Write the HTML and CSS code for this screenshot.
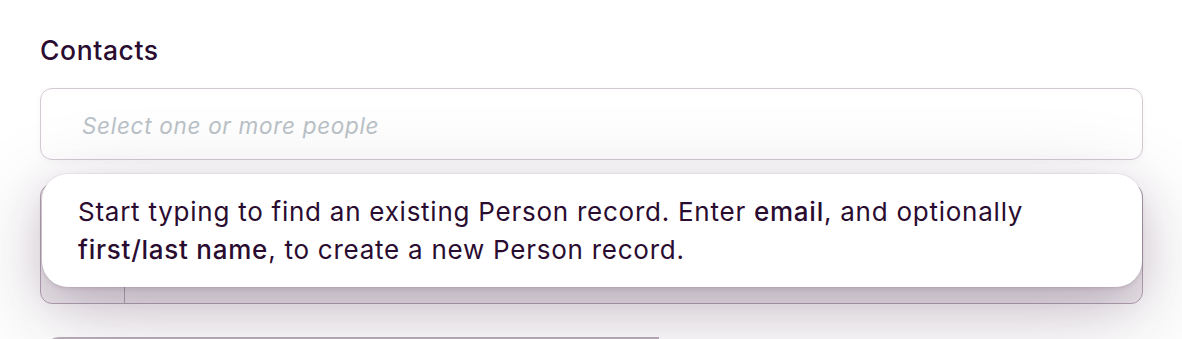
FILE: index.html
```html
<!DOCTYPE html>
<html>
<head>
<meta charset="utf-8">
<link rel="stylesheet" href="styles.css">
</head>
<body>
<div class="page">
  <div class="field">
    <label class="label">Contacts</label>
    <div class="input">
      <span class="placeholder">Select one or more people</span>
    </div>
    <div class="composite">
      <div class="prefix"></div>
      <div class="main"></div>
    </div>
    <div class="next"></div>
    <div class="popover">
      Start typing to find an existing Person record. Enter <b>email</b>, and optionally <b>first/last name</b>, to create a new Person record.
    </div>
  </div>
</div>
</body>
</html>
```
FILE: styles.css
```css
html, body {
  margin: 0;
  padding: 0;
  background: #ffffff;
  overflow: hidden;
}
.page {
  width: 1182px;
  height: 339px;
  overflow: hidden;
  font-family: Inter, "Noto Sans", sans-serif;
  color: #2a0c30;
}
.field {
  position: relative;
  margin-left: 40px;
  width: 1103px;
  padding-top: 35px;
  display: flex;
  flex-direction: column;
}
.label {
  font-size: 26.5px;
  line-height: 31px;
  font-weight: 500;
  letter-spacing: 0.6px;
  margin-bottom: 22px;
}
.input {
  box-sizing: border-box;
  height: 72px;
  border: 1.5px solid #d3cad4;
  border-radius: 12px;
  display: flex;
  align-items: center;
  padding-left: 41px;
  box-shadow: 0 2px 6px rgba(60, 30, 60, 0.04);
}
.placeholder {
  font-style: italic;
  font-size: 22.5px;
  letter-spacing: 0.7px;
  color: #bac2c8;
  padding-top: 2px;
}
.composite {
  box-sizing: border-box;
  margin-top: 24px;
  height: 120px;
  border: 1.5px solid #b7a8b8;
  border-radius: 12px;
  display: flex;
  background: #f2eff2;
}
.prefix {
  width: 83px;
  border-right: 1.5px solid #b7a8b8;
}
.main { flex: 1; }
.next {
  margin-top: 33px;
  margin-left: 5px;
  width: 612px;
  height: 20px;
  border-top: 2px solid #bdafbd;
  border-left: 2px solid #bdafbd;
  border-top-left-radius: 14px;
  background: #ebe8eb;
}
.popover {
  position: absolute;
  left: 2px;
  top: 174px;
  width: 1100px;
  height: 113px;
  box-sizing: border-box;
  background: #ffffff;
  border-radius: 26px;
  padding: 19px 36px 0 36px;
  font-size: 26px;
  letter-spacing: 0.75px;
  line-height: 38px;
  box-shadow: 0 0 0 1px rgba(60, 30, 60, 0.04), 0 2px 4px rgba(60, 30, 60, 0.10), 0 14px 40px rgba(60, 30, 60, 0.18), 0 30px 100px rgba(60, 30, 60, 0.2);
}
.popover b {
  font-weight: 500;
}
```
